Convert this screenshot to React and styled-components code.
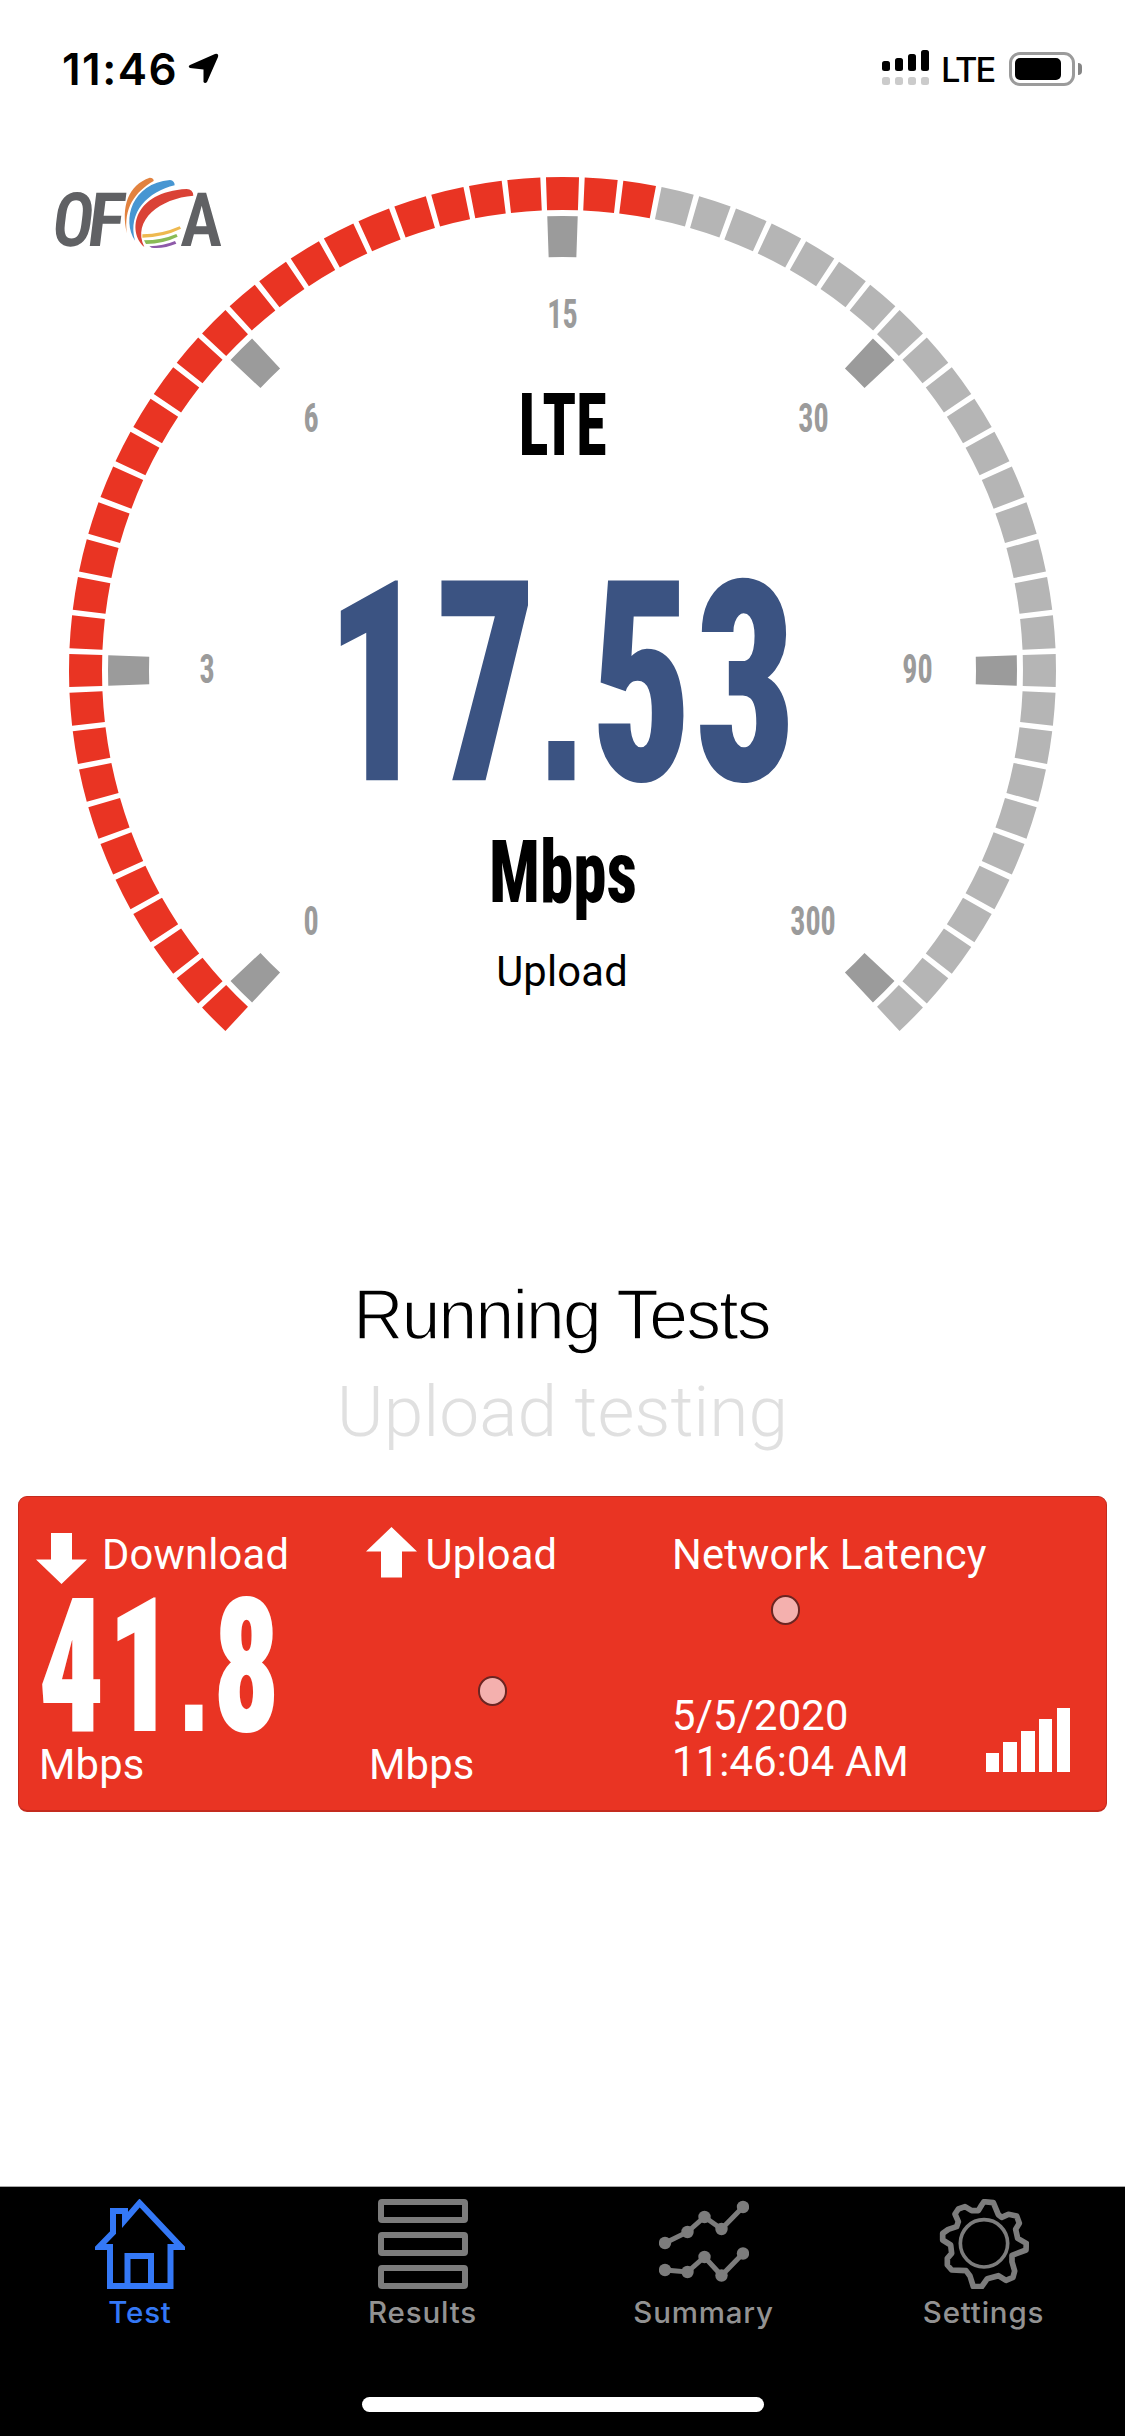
import styled, { createGlobalStyle } from "styled-components";

const RED = "#e93423";
const CONDENSED = '"Roboto Condensed", Roboto, "Liberation Sans", sans-serif';

const CENTER = { x: 562.5, y: 670.5 };
const SEGMENT_COUNT = 61;
const ACTIVE_SEGMENTS = 33;
const SEGMENT_STEP = 4.5;
const SEGMENT_HALF = 1.92;

const TICKS = [
  { angle: -135, label: "0", x: 311, y: 934.5 },
  { angle: -90, label: "3", x: 207, y: 682.5 },
  { angle: -45, label: "6", x: 311, y: 431.5 },
  { angle: 0, label: "15", x: 562.5, y: 327.5 },
  { angle: 45, label: "30", x: 813.5, y: 431.5 },
  { angle: 90, label: "90", x: 917.5, y: 682.5 },
  { angle: 135, label: "300", x: 813, y: 934.5 },
];

const polar = (radius, angle) => {
  const rad = (angle * Math.PI) / 180;
  return `${CENTER.x + radius * Math.sin(rad)} ${
    CENTER.y - radius * Math.cos(rad)
  }`;
};

// wedge between two radii, centred on the given angle
const wedge = (outer, inner, angle) => {
  const from = angle - SEGMENT_HALF;
  const to = angle + SEGMENT_HALF;
  return `M${polar(outer, from)}A${outer} ${outer} 0 0 1 ${polar(
    outer,
    to
  )}L${polar(inner, to)}A${inner} ${inner} 0 0 0 ${polar(inner, from)}Z`;
};

const NUMBER_SCALE = 0.7;

const NarrowNumber = ({ centers, y, size, fill, value }) => {
  const [whole, decimals] = value.split(".");
  return (
    <NumberText
      transform={`scale(${NUMBER_SCALE} 1)`}
      x={centers.map((c) => c / NUMBER_SCALE).join(" ")}
      y={y}
      fontSize={size}
      fill={fill}
    >
      {whole}
      <Point fontSize={size * 0.94}>.</Point>
      {decimals}
    </NumberText>
  );
};

const Gauge = () => (
  <GaugeSvg viewBox="0 132 1125 900">
    {Array.from({ length: SEGMENT_COUNT }, (_, i) => (
      <path
        key={i}
        d={wedge(493.5, 460.5, (i - 30) * SEGMENT_STEP)}
        fill={i < ACTIVE_SEGMENTS ? RED : "#b5b5b5"}
      />
    ))}
    {TICKS.map(({ angle, label, x, y }) => (
      <g key={label} fill="#9b9b9b">
        <path d={wedge(454.5, 413.5, angle)} />
        <TickText
          x={x}
          y={y}
          fontSize={41.5}
          textLength={label.length * 15.2}
          lengthAdjust="spacingAndGlyphs"
        >
          {label}
        </TickText>
      </g>
    ))}
    <BoldText
      x={562.7}
      y={455.3}
      fontSize={88}
      textLength={88}
      lengthAdjust="spacingAndGlyphs"
    >
      LTE
    </BoldText>
    <NarrowNumber
      centers={[376, 486, 561.5, 642, 745.5]}
      y={780.3}
      size={281}
      fill="#3b5382"
      value="17.53"
    />
    <BoldText
      x={563}
      y={902}
      fontSize={88}
      textLength={148}
      lengthAdjust="spacingAndGlyphs"
    >
      Mbps
    </BoldText>
    <PlainText x={562} y={985.7}>
      Upload
    </PlainText>
  </GaugeSvg>
);

const Logo = () => (
  <LogoSvg viewBox="40 160 200 100">
    <g fill="#606164" fontSize={75}>
      <LogoLetter transform="translate(50 245.500) skewX(-7)" textLength={41}>
        O
      </LogoLetter>
      <LogoLetter transform="translate(85 245.500) skewX(-7)" textLength={37}>
        F
      </LogoLetter>
      <LogoLetter transform="translate(180 245.500) skewX(-1)" textLength={42}>
        A
      </LogoLetter>
    </g>
    <g transform="translate(0 20) scale(.33333)">
      <path
        d="M449 473Q462 474 461 483C405 515 370 565 381 640C362 560 385 495 449 473Z"
        fill="#e2823f"
      />
      <path
        d="M510 480Q524 482 524 496C445 515 382 575 405 662C365 600 395 490 510 480Z"
        fill="#4796d2"
      />
      <path
        d="M560 507Q579 507 580 527C480 535 395 600 433 681C380 635 400 515 560 507Z"
        fill="#da4236"
      />
      <path d="M427 643Q485 643 539 619L543 626Q490 652 427 653Z" fill="#eeb950" />
      <path d="M432 661Q485 661 529 642L533 650Q490 671 438 672Z" fill="#8abb56" />
      <path d="M448 679Q490 678 525 663L529 671Q490 687 455 683Z" fill="#8e5aa9" />
    </g>
  </LogoSvg>
);

const HomeIcon = () => (
  <Icon viewBox="0 0 90 90">
    <path d="M44.6 4L30 21V12H18V33.5L4 48H15V87H75.5V48H86Z" />
    <path d="M32.5 87V57H56V87" />
  </Icon>
);

const ResultsIcon = () => (
  <Icon viewBox="0 0 90 90">
    <rect x="3" y="3" width="84" height="18" rx="1" />
    <rect x="3" y="36" width="84" height="18" rx="1" />
    <rect x="3" y="69" width="84" height="18" rx="1" />
  </Icon>
);

const LINES = [
  [[6, 44], [28.5, 33], [45.5, 18], [62.5, 30], [84, 8]],
  [[6, 71], [28.5, 73], [45.5, 58], [62.5, 76.5], [84, 54.5]],
];

const SummaryIcon = () => (
  <Icon viewBox="0 0 90 90">
    {LINES.map((points, i) => (
      <g key={i}>
        <polyline points={points.join(" ")} strokeWidth="5" />
        {points.map(([x, y]) => (
          <circle key={x} cx={x} cy={y} r="6.2" fill="currentColor" stroke="none" />
        ))}
      </g>
    ))}
  </Icon>
);

const SettingsIcon = () => (
  <Icon viewBox="27 27 270 270">
    <path
      strokeWidth="17"
      strokeLinejoin="round"
      d="M162 35L190 38L205 74L215 82L235 73L260 78L268 100L257 118L263 145L289 160L288 180L246 196V215L254 243L249 262L228 271L205 257L172 266L155 290H130L120 258L108 242L65 240L52 225V205L65 190L62 165L38 150V130L55 118L80 110L85 95L75 72L85 57L105 50L125 62H145L155 45Z"
    />
    <circle cx="162" cy="160" r="71" strokeWidth="11" />
  </Icon>
);

const TABS = [
  { label: "Test", icon: HomeIcon, active: true },
  { label: "Results", icon: ResultsIcon },
  { label: "Summary", icon: SummaryIcon },
  { label: "Settings", icon: SettingsIcon },
];

const App = () => (
  <Screen>
    <GlobalStyle />
    <StatusBar>
      <Clock>11:46</Clock>
      <LocationArrow viewBox="188 53 31 31">
        <path d="M190 65L215 54Q219 53 218 57L207 82Q205 84 203.5 82V69.5L190 68Q187.500 66.500 190 65Z" />
      </LocationArrow>
      <Signal viewBox="882 50 47 35">
        {[61, 58, 54, 50].map((top, i) => (
          <g key={top}>
            <rect x={882 + i * 13} y={top} width="8" height={71 - top} rx="2.5" />
            <rect x={882 + i * 13} y="77" width="8" height="8" rx="2.5" fill="#cbcbcb" />
          </g>
        ))}
      </Signal>
      <Carrier>LTE</Carrier>
      <Battery>
        <BatteryLevel />
      </Battery>
      <BatteryCap />
    </StatusBar>

    <Logo />
    <Gauge />

    <Heading>Running Tests</Heading>
    <SubHeading>Upload testing</SubHeading>

    <Card>
      <Column>
        <ColumnHeader gap={15}>
          <Arrow viewBox="0 0 51 51" top={6}>
            <path d="M15 0H36V26.500H51L25.500 51L0 26.500H15Z" />
          </Arrow>
          <Label>Download</Label>
        </ColumnHeader>
        <Reading viewBox="36 1587 250 154">
          <NarrowNumber
            centers={[71.5, 141, 194, 246.5]}
            y={1731}
            size={187}
            fill="#fff"
            value="41.8"
          />
        </Reading>
        <Unit>Mbps</Unit>
      </Column>
      <Column>
        <ColumnHeader gap={8.5}>
          <Arrow viewBox="0 0 51 51">
            <path d="M15 50.500H36V24.600H51L25.500 0L0 24.600H15Z" />
          </Arrow>
          <Label>Upload</Label>
        </ColumnHeader>
        <Pending height={154} top={89} left={111.5}>
          <Dot />
        </Pending>
        <Unit>Mbps</Unit>
      </Column>
      <Column>
        <ColumnHeader>
          <Label>Network Latency</Label>
        </ColumnHeader>
        <Pending height={105.5} top={8} left={98.5}>
          <Dot />
        </Pending>
        <CardFooter>
          <Timestamp>
            5/5/2020
            <br />
            11:46:04 AM
          </Timestamp>
          <Bars>
            {[18.5, 30, 41, 52.5, 64].map((height) => (
              <Bar key={height} height={height} />
            ))}
          </Bars>
        </CardFooter>
      </Column>
    </Card>

    <TabBar>
      <Tabs>
        {TABS.map(({ label, icon: TabIcon, active }) => (
          <Tab key={label} $active={active}>
            <TabIcon />
            <TabLabel $active={active}>{label}</TabLabel>
          </Tab>
        ))}
      </Tabs>
      <HomeIndicator />
    </TabBar>
  </Screen>
);

const GlobalStyle = createGlobalStyle`
  body {
    margin: 0;
    background: #fff;
  }
`;

const Screen = styled.div`
  position: relative;
  display: flex;
  flex-direction: column;
  width: 1125px;
  height: 2436px;
  overflow: hidden;
  background: #fff;
  font-family: Roboto, "Liberation Sans", sans-serif;
`;

const StatusBar = styled.div`
  display: flex;
  align-items: flex-start;
  box-sizing: border-box;
  height: 132px;
  padding: 43px 43px 0 62px;
`;

const Clock = styled.div`
  width: 126px;
  font: 600 44px/52px Inter, sans-serif;
  letter-spacing: 1.5px;
`;

const LocationArrow = styled.svg`
  width: 31px;
  height: 31px;
  margin-top: 10px;
`;

const Signal = styled.svg`
  width: 47px;
  height: 35px;
  margin: 7px 12px 0 auto;
`;

const Carrier = styled.div`
  width: 68px;
  margin-top: 7px;
  font: 450 34.5px/40px Inter, sans-serif;
  letter-spacing: -2.2px;
`;

const Battery = styled.div`
  box-sizing: border-box;
  width: 66px;
  height: 34px;
  margin-top: 9px;
  padding: 3px;
  border: 3px solid #9b9b9b;
  border-radius: 11px;
`;

const BatteryLevel = styled.div`
  width: 46px;
  height: 22px;
  border-radius: 5px;
  background: #000;
`;

const BatteryCap = styled.div`
  width: 4px;
  height: 12px;
  margin: 20px 0 0 3px;
  border-radius: 0 4px 4px 0;
  background: #858585;
`;

const LogoSvg = styled.svg`
  position: absolute;
  top: 160px;
  left: 40px;
  width: 200px;
  height: 100px;
  overflow: visible;
`;

const LogoLetter = styled.text.attrs({ lengthAdjust: "spacingAndGlyphs" })`
  font-family: ${CONDENSED};
  font-weight: 650;
`;

const GaugeSvg = styled.svg`
  display: block;
  width: 1125px;
  height: 900px;
`;

const BoldText = styled.text`
  font-family: ${CONDENSED};
  font-weight: 800;
  text-anchor: middle;
`;

const NumberText = styled(BoldText)`
  font-weight: 900;
`;

const TickText = styled(BoldText)`
  font-weight: 700;
`;

const Point = styled.tspan`
  font-family: "Liberation Sans", Arial, sans-serif;
  font-weight: 700;
`;

const PlainText = styled.text`
  font-size: 41.7px;
  letter-spacing: 0.2px;
  text-anchor: middle;
`;

const Heading = styled.div`
  margin-top: 243px;
  color: #000;
  font: 400 69.5px/80px "Liberation Sans", Arial, sans-serif;
  letter-spacing: -1.75px;
  text-indent: -2px;
  text-align: center;
  -webkit-text-stroke: 1.4px #fff;
`;

const SubHeading = styled.div`
  margin-top: 15px;
  color: #e0e0e0;
  font-size: 71.3px;
  font-weight: 300;
  line-height: 84px;
  text-align: center;
`;

const Card = styled.div`
  display: grid;
  grid-template-columns: 330px 306px 1fr;
  box-sizing: border-box;
  width: 1089px;
  height: 316px;
  margin: 42px 0 0 18px;
  padding: 30px 36px 0 17px;
  border: 1px solid #c42b1e;
  border-bottom-width: 2px;
  border-radius: 9px;
  background: ${RED};
  color: #fff;
  font-size: 41.7px;
  letter-spacing: 0.2px;
`;

const Column = styled.div`
  display: flex;
  flex-direction: column;
`;

const ColumnHeader = styled.div`
  display: flex;
  gap: ${({ gap = 0 }) => gap}px;
  height: 60px;
`;

const Arrow = styled.svg`
  width: 51px;
  height: 51px;
  margin-top: ${({ top = 0 }) => top}px;
  fill: #fff;
`;

const Label = styled.div`
  margin-top: 3.5px;
  line-height: 48px;
  white-space: nowrap;
`;

const Reading = styled.svg`
  width: 250px;
  height: 154px;
  overflow: visible;
`;

const Unit = styled.div`
  padding-left: 3px;
  line-height: 48px;
`;

const Pending = styled.div`
  box-sizing: border-box;
  height: ${({ height }) => height}px;
  padding: ${({ top, left }) => `${top}px 0 0 ${left}px`};
`;

const Dot = styled.div`
  box-sizing: border-box;
  width: 29.5px;
  height: 29.5px;
  border: 2.5px solid #6b2522;
  border-radius: 50%;
  background: #f4b0ae;
`;

const CardFooter = styled.div`
  display: flex;
  justify-content: space-between;
  align-items: flex-end;
`;

const Timestamp = styled.div`
  line-height: 46px;
  white-space: nowrap;
`;

const Bars = styled.div`
  display: flex;
  align-items: flex-end;
  gap: 4.25px;
  padding-bottom: 13px;
`;

const Bar = styled.div`
  width: 13.5px;
  height: ${({ height }) => height}px;
  background: #fff;
`;

const TabBar = styled.div`
  display: flex;
  flex-direction: column;
  align-items: center;
  justify-content: space-between;
  box-sizing: border-box;
  height: 250px;
  margin-top: auto;
  padding: 12px 0 24px;
  border-top: 1px solid #a8a8a8;
  background: #000;
`;

const Tabs = styled.div`
  display: grid;
  grid-template-columns: 280px 285px 277px 283px;
`;

const Tab = styled.div`
  display: flex;
  flex-direction: column;
  align-items: center;
  color: ${({ $active }) => ($active ? "#3478f6" : "#7c7c7c")};
`;

const TabLabel = styled.div`
  margin-top: 4.6px;
  color: ${({ $active }) => ($active ? "#3478f6" : "#929292")};
  font: 450 29.5px/36px Inter, sans-serif;
  letter-spacing: 0.8px;
`;

const Icon = styled.svg.attrs({
  fill: "none",
  stroke: "currentColor",
  strokeWidth: 6,
})`
  width: 90px;
  height: 90px;
`;

const HomeIndicator = styled.div`
  width: 402px;
  height: 15px;
  border-radius: 8px;
  background: #fff;
`;

export default App;
